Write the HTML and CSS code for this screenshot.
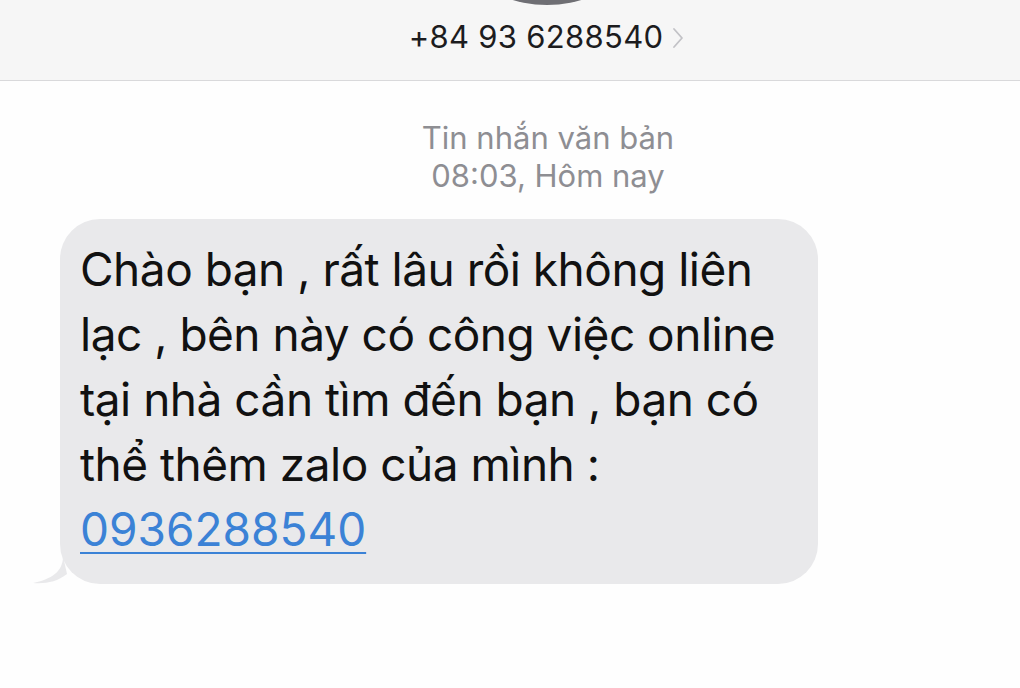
FILE: index.html
```html
<!DOCTYPE html>
<html lang="vi">
<head>
    <meta charset="UTF-8">
    <title>Tin nhắn</title>
    <link rel="stylesheet" href="styles.css">
</head>
<body>
    <header class="contact-bar">
        <div class="avatar"></div>
        <div class="contact-name">
            <span>+84 93 6288540</span>
            <svg class="chevron" width="14" height="24" viewBox="0 0 14 24"><path d="M3 3 L11 12 L3 21" fill="none" stroke="#c2c2c6" stroke-width="1.8" stroke-linecap="round" stroke-linejoin="round"/></svg>
        </div>
    </header>
    <main class="thread">
        <div class="meta">
            <div>Tin nhắn văn bản</div>
            <div>08:03, Hôm nay</div>
        </div>
        <div class="bubble-row">
            <div class="bubble">
                Chào bạn , rất lâu rồi không liên<br>
                lạc , bên này có công việc online<br>
                tại nhà cần tìm đến bạn , bạn có<br>
                thể thêm zalo của mình :<br>
                <a href="#" class="link">0936288540</a>
                <svg class="tail" width="34" height="28" viewBox="0 0 34 28"><path d="M30 0 C30 12 24 22 0 27 C12 28 24 26 34 18 Z" fill="#e9e9eb"/></svg>
            </div>
        </div>
    </main>
</body>
</html>
```

FILE: styles.css
```css
* { box-sizing: border-box; margin: 0; padding: 0; }
body {
    font-family: 'Inter', 'Liberation Sans', sans-serif;
    background-color: #fefefe;
    color: #000;
    width: 1020px;
    height: 688px;
    overflow: hidden;
}
.contact-bar {
    height: 81px;
    background-color: #f6f6f6;
    border-bottom: 1px solid #d9d9db;
    display: flex;
    flex-direction: column;
    align-items: center;
    padding-left: 74px;
    overflow: hidden;
}
.avatar {
    width: 240px;
    height: 240px;
    border-radius: 50%;
    background-color: #6f6f74;
    margin-top: -235px;
    flex-shrink: 0;
}
.contact-name {
    display: flex;
    align-items: center;
    gap: 8px;
    margin-top: 13px;
    margin-left: 0;
    font-size: 31px;
    color: #1c1c1e;
    letter-spacing: 0.3px;
}
.chevron { margin-top: 2px; }
.thread { padding: 38px 0 0; }
.meta {
    text-align: center;
    padding-left: 76px;
    color: #8e8e93;
    font-size: 31px;
    line-height: 38px;
}
.bubble-row { padding: 24px 0 0 60px; }
.bubble {
    position: relative;
    width: 758px;
    background-color: #e9e9eb;
    border-radius: 40px;
    padding: 18px 20px 22px 20px;
    font-size: 46px;
    letter-spacing: -0.5px;
    line-height: 65px;
    color: #111;
}
.link { color: #3b82d6; letter-spacing: 0; text-decoration: underline; text-decoration-thickness: 2px; text-underline-offset: 6px; }
.tail { position: absolute; left: -27px; bottom: 0; }
```
